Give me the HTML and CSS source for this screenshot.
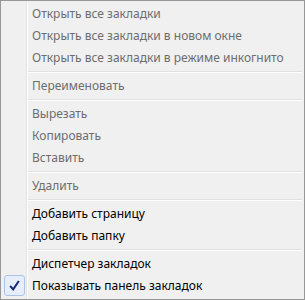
FILE: index.html
```html
<!DOCTYPE html>
<html lang="ru">
<head>
    <meta charset="UTF-8">
    <title>Закладки</title>
    <link rel="stylesheet" href="styles.css">
</head>
<body>

    <div class="menu">
        <div class="item disabled">Открыть все закладки</div>
        <div class="item disabled">Открыть все закладки в новом окне</div>
        <div class="item disabled">Открыть все закладки в режиме инкогнито</div>
        <div class="sep"></div>
        <div class="item disabled">Переименовать</div>
        <div class="sep"></div>
        <div class="item disabled">Вырезать</div>
        <div class="item disabled">Копировать</div>
        <div class="item disabled">Вставить</div>
        <div class="sep"></div>
        <div class="item disabled">Удалить</div>
        <div class="sep"></div>
        <div class="item">Добавить страницу</div>
        <div class="item">Добавить папку</div>
        <div class="sep"></div>
        <div class="item">Диспетчер закладок</div>
        <div class="item checked">
            <span class="check">
                <svg width="13" height="13" viewBox="0 0 12 12">
                    <path d="M2 6.5 L4.8 9.6 L10 1.8" fill="none" stroke="#1b2a7a" stroke-width="1.9"/>
                </svg>
            </span>
            Показывать панель закладок
        </div>
    </div>

</body>
</html>
```

FILE: styles.css
```css
body {
    margin: 0;
    font-family: "Noto Sans", "Open Sans", sans-serif;
}
.menu {
    width: 305px;
    height: 300px;
    box-sizing: border-box;
    border: 1px solid #979797;
    background-color: #f0f0f0;
    padding: 2px 2px 2px 0;
    position: relative;
}
.menu::before {
    content: "";
    position: absolute;
    top: 0;
    bottom: 0;
    left: 25px;
    width: 1px;
    background-color: #e2e3e3;
    border-right: 1px solid #ffffff;
}
.item {
    height: 22px;
    line-height: 22px;
    padding-left: 31px;
    font-size: 12px;
    color: #000;
    position: relative;
    white-space: nowrap;
}
.disabled {
    color: #6d6d6d;
}
.sep {
    height: 1px;
    margin: 2px 0 2px 27px;
    background-color: #e0e0e0;
    border-bottom: 1px solid #ffffff;
}
.check {
    position: absolute;
    left: 3px;
    top: 0;
    width: 19px;
    height: 19px;
    border: 1px solid #a9c6e8;
    border-radius: 3px;
    background-color: #e6eef9;
    display: flex;
    align-items: center;
    justify-content: center;
}
```
